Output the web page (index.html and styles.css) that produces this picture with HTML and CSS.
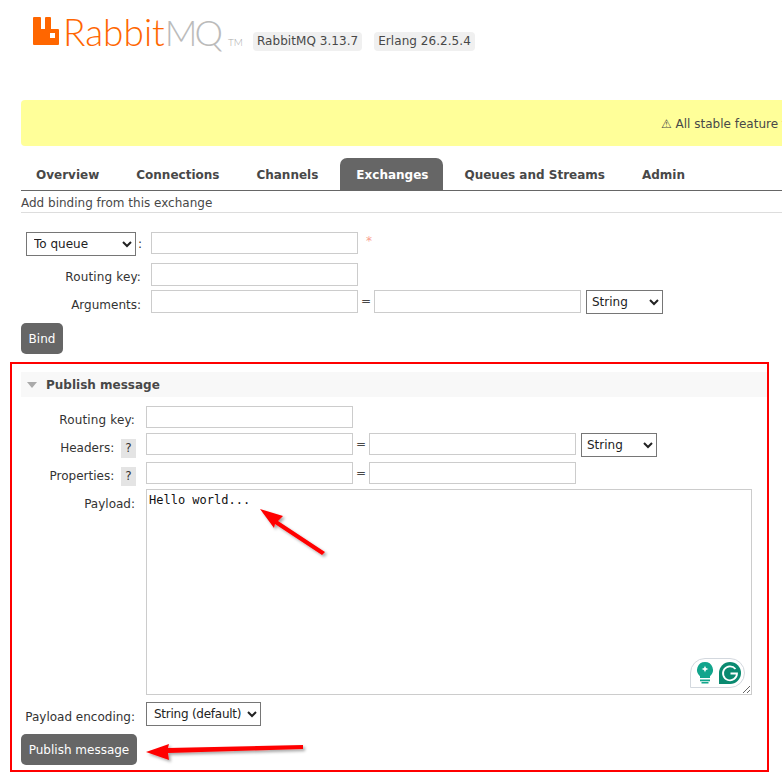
FILE: index.html
```html
<!DOCTYPE html>
<html lang="en">
<head>
    <meta charset="UTF-8">
    <meta name="viewport" content="width=device-width, initial-scale=1.0">
    <title>RabbitMQ Management</title>
    <link rel="stylesheet" href="styles.css">
</head>
<body>
    <div class="header">
        <div class="logo">
            <svg class="logo-mark" width="26" height="28" viewBox="0 0 26 28">
                <path fill="#f60" fill-rule="evenodd" d="M0 1a1 1 0 0 1 1-1H7a1 1 0 0 1 1 1V12H12V1a1 1 0 0 1 1-1H17a1 1 0 0 1 1 1V12H25a1 1 0 0 1 1 1V27a1 1 0 0 1-1 1H1a1 1 0 0 1-1-1ZM17 16V21H22V16Z"/>
            </svg>
            <span class="logo-rabbit">Rabbit</span><span class="logo-mq">MQ</span><span class="logo-tm">TM</span>
        </div>
        <span class="version version-first">RabbitMQ 3.13.7</span>
        <span class="version">Erlang 26.2.5.4</span>
    </div>

    <div class="banner">⚠ All stable feature flags must be enabled after completing an upgrade.</div>

    <ul class="tabs">
        <li>Overview</li>
        <li>Connections</li>
        <li>Channels</li>
        <li class="selected">Exchanges</li>
        <li>Queues and Streams</li>
        <li>Admin</li>
    </ul>

    <h3 class="subhead">Add binding from this exchange</h3>

    <form class="form bind-form">
        <div class="row row-dest">
            <div class="label">
                <select class="select select-dest"><option>To queue</option></select><span class="colon">:</span>
            </div>
            <input class="text" type="text">
            <span class="mand">*</span>
        </div>
        <div class="row row-key">
            <div class="label">Routing key:</div>
            <input class="text" type="text">
        </div>
        <div class="row row-args">
            <div class="label">Arguments:</div>
            <input class="text" type="text">
            <span class="eq">=</span>
            <input class="text" type="text">
            <select class="select select-type"><option>String</option></select>
        </div>
        <button class="btn bind-btn" type="button">Bind</button>
    </form>

    <section class="publish">
        <h2 class="section-head"><span class="triangle"></span>Publish message</h2>
        <form class="form publish-form">
            <div class="row pub-key">
                <div class="label">Routing key:</div>
                <input class="text" type="text">
            </div>
            <div class="row pub-headers">
                <div class="label">Headers: <span class="help">?</span></div>
                <input class="text" type="text">
                <span class="eq">=</span>
                <input class="text" type="text">
                <select class="select select-type select-short"><option>String</option></select>
            </div>
            <div class="row pub-props">
                <div class="label">Properties: <span class="help">?</span></div>
                <input class="text" type="text">
                <span class="eq">=</span>
                <input class="text" type="text">
            </div>
            <div class="row pub-payload">
                <div class="label">Payload:</div>
                <div class="payload-wrap">
                    <textarea class="payload">Hello world...</textarea>
                    <div class="grammarly">
                        <svg width="20" height="24" viewBox="0 0 20 24">
                            <path fill="#12a58c" d="M10 1a8 8 0 0 1 5 14.2V17H5v-1.8A8 8 0 0 1 10 1Z"/>
                            <path fill="#fff" d="M10 4.500c.5 2.200 1.300 3 3.500 3.500-2.200.5-3 1.300-3.500 3.500-.5-2.200-1.300-3-3.500-3.500 2.200-.5 3-1.300 3.500-3.500Z"/>
                            <rect x="5" y="18.500" width="10" height="1.800" fill="#12a58c"/>
                            <rect x="6.500" y="21" width="7" height="1.500" fill="#12a58c"/>
                        </svg>
                        <svg class="grammarly-g" width="22" height="22" viewBox="0 0 22 22">
                            <path fill="#0a8a70" d="M11 0a11 11 0 0 1 0 22H0V11A11 11 0 0 1 11 0Z"/>
                            <path fill="none" stroke="#fff" stroke-width="1.800" d="M16.500 7A7 7 0 1 0 18 11.500H11.500"/>
                        </svg>
                    </div>
                </div>
            </div>
            <div class="row pub-encoding">
                <div class="label">Payload encoding:</div>
                <select class="select select-encoding"><option>String (default)</option></select>
            </div>
            <button class="btn publish-btn" type="button">Publish message</button>
        </form>
    </section>

    <!-- annotation arrows drawn over the screenshot -->
    <svg class="annotations" width="782" height="778" viewBox="0 0 782 778">
        <defs>
            <filter id="arrow-shadow" x="-20%" y="-20%" width="140%" height="140%">
                <feDropShadow dx="2" dy="2" stdDeviation="1.500" flood-color="#000" flood-opacity="0.35"/>
            </filter>
        </defs>
        <g fill="#f00" filter="url(#arrow-shadow)">
            <path d="M260 509 283 516 278 521 325 552 322 555 275 524 274 528Z"/>
            <path d="M146 752 169 744 168 748 303 745 303 749 168 753 169 760Z"/>
        </g>
    </svg>
</body>
</html>
```

FILE: styles.css
```css
html, body {
    margin: 0;
    padding: 0;
}
body {
    width: 782px;
    height: 778px;
    overflow: hidden;
    position: relative;
    background: #fff;
    color: #484848;
    font-family: "DejaVu Sans", Verdana, sans-serif;
    font-size: 12px;
}
.header {
    height: 100px;
    display: flex;
    align-items: flex-start;
}
.logo {
    display: flex;
    align-items: flex-start;
    margin-left: 33px;
    margin-top: 17px;
    width: 220px;
    height: 30px;
    font-family: Lato, "Liberation Sans", sans-serif;
    font-weight: 300;
}
.logo-mark {
    flex: none;
}
.logo-rabbit {
    color: #f60;
    font-size: 37px;
    line-height: 30px;
    margin-left: 4px;
}
.logo-mq {
    color: #bbb;
    font-size: 36px;
    line-height: 30px;
    letter-spacing: -3px;
}
.logo-tm {
    color: #aaa;
    font-size: 10px;
    line-height: 10px;
    margin-top: 20px;
    margin-left: 8px;
}
.version {
    margin-top: 32px;
    background: #f0f0f0;
    border-radius: 4px;
    color: #484848;
    font-size: 12px;
    line-height: 19px;
    padding: 0 4px;
    letter-spacing: 0.05px;
}
.version-first {
    margin-right: 12px;
}
.banner {
    height: 46px;
    line-height: 48px;
    margin-left: 21px;
    padding-left: 640px;
    background: #ff9;
    border-radius: 4px 0 0 4px;
    white-space: nowrap;
    overflow: hidden;
    font-size: 12px;
    color: #484848;
}
.tabs {
    list-style: none;
    display: flex;
    margin: 12px 0 0 21px;
    padding: 0;
    height: 32px;
    border-bottom: 1px solid #666;
}
.tabs li {
    padding: 0 16px 0 15px;
    margin-right: 6px;
    font-size: 12px;
    font-weight: bold;
    line-height: 34px;
    color: #484848;
    border-radius: 7px 7px 0 0;
}
.tabs .selected {
    background: #666;
    color: #fff;
    padding: 0 15px 0 16px;
}
.subhead {
    margin: 5px 0 0 21px;
    padding: 0 0 2px;
    height: 14px;
    border-bottom: 1px solid #ddd;
    font-size: 12px;
    line-height: 14px;
    font-weight: normal;
}
.row {
    display: flex;
    align-items: flex-start;
}
.label {
    text-align: right;
    color: #333;
    white-space: nowrap;
    flex: none;
}
.text {
    box-sizing: border-box;
    width: 207px;
    height: 23px;
    margin: 0;
    padding: 2px;
    border: 1px solid #ccc;
    background: #fff;
    flex: none;
}
.eq {
    width: 16px;
    text-align: center;
    line-height: 23px;
    color: #484848;
    flex: none;
}
.select {
    font-family: "DejaVu Sans", Verdana, sans-serif;
    font-size: 12px;
    height: 24px;
    padding-left: 3px;
    background: #fff;
    color: #222;
    flex: none;
}
.select-dest {
    width: 110px;
}
.select-type {
    width: 77px;
    margin-left: 5px;
    padding-left: 1px;
}
.select-short {
    width: 76px;
}
.select-encoding {
    width: 115px;
    letter-spacing: -0.25px;
}
.btn {
    display: block;
    border: none;
    border-radius: 5px;
    background: #666;
    color: #fff;
    font-family: "DejaVu Sans", Verdana, sans-serif;
    font-size: 12px;
    height: 31px;
    padding: 0 8px;
}

/* bind form */
.bind-form {
    margin: 19px 0 0 21px;
}
.bind-form .label {
    width: 120px;
    line-height: 28px;
    margin-right: 10px;
}
.row-args .label {
    line-height: 30px;
}
.row-key .label, .pub-key .label {
    letter-spacing: 0.15px;
}
.row-dest {
    height: 31px;
}
.row-dest .label {
    display: flex;
    justify-content: flex-start;
    align-items: flex-start;
    margin-left: 5px;
    width: 115px;
}
.colon {
    margin-left: 2px;
    line-height: 24px;
}
.row-dest .text {
    height: 22px;
}
.mand {
    margin-left: 8px;
    color: #f9a08f;
    line-height: 18px;
    font-size: 12px;
}
.row-key {
    height: 27px;
}
.row-args {
    height: 33px;
}
.bind-btn {
    width: 42px;
    padding: 0;
}

/* publish section */
.publish {
    box-sizing: border-box;
    width: 759px;
    height: 410px;
    margin: 8px 0 0 10px;
    padding: 8px 0 0 9px;
    border: 2px solid #f00;
}
.section-head {
    display: flex;
    align-items: center;
    margin: 0;
    height: 25px;
    background: #f8f8f8;
    font-size: 12px;
    color: #484848;
}
.triangle {
    width: 0;
    height: 0;
    margin: 0 9px 0 6px;
    border-left: 5.500px solid transparent;
    border-right: 5.500px solid transparent;
    border-top: 6px solid #aaa;
}
.publish-form {
    margin-top: 9px;
}
.publish-form .label {
    width: 114px;
    margin-right: 11px;
    line-height: 28px;
}
.publish-form .pub-headers .label, .publish-form .pub-payload .label, .publish-form .pub-encoding .label {
    line-height: 30px;
}
.pub-key {
    height: 27px;
}
.pub-headers {
    height: 29px;
}
.pub-props {
    height: 27px;
}
.pub-props .text, .pub-headers .text, .pub-key .text {
    height: 22px;
}
.help {
    display: inline-block;
    width: 15px;
    height: 19px;
    margin-left: 3px;
    margin-right: -1px;
    background: #e4e4e4;
    text-align: center;
    line-height: 19px;
    vertical-align: middle;
    color: #333;
}
.pub-payload {
    height: 213px;
}
.payload-wrap {
    position: relative;
    width: 606px;
    height: 206px;
}
.payload {
    box-sizing: border-box;
    display: block;
    width: 606px;
    height: 206px;
    margin: 0;
    padding: 2px;
    border: 1px solid #ccc;
    outline: none;
    font-family: "DejaVu Sans Mono", monospace;
    font-size: 12px;
    line-height: 16px;
    color: #111;
}
.grammarly {
    position: absolute;
    left: 544px;
    top: 169px;
    box-sizing: border-box;
    width: 55px;
    height: 30px;
    display: flex;
    align-items: center;
    gap: 4px;
    padding-left: 4px;
    background: #fff;
    border: 1px solid #d3d8de;
    border-radius: 15px 15px 15px 0;
}
.pub-encoding {
    height: 32px;
}
.publish-btn {
    width: 116px;
    padding: 0;
}
.annotations {
    position: absolute;
    left: 0;
    top: 0;
    pointer-events: none;
}
```
